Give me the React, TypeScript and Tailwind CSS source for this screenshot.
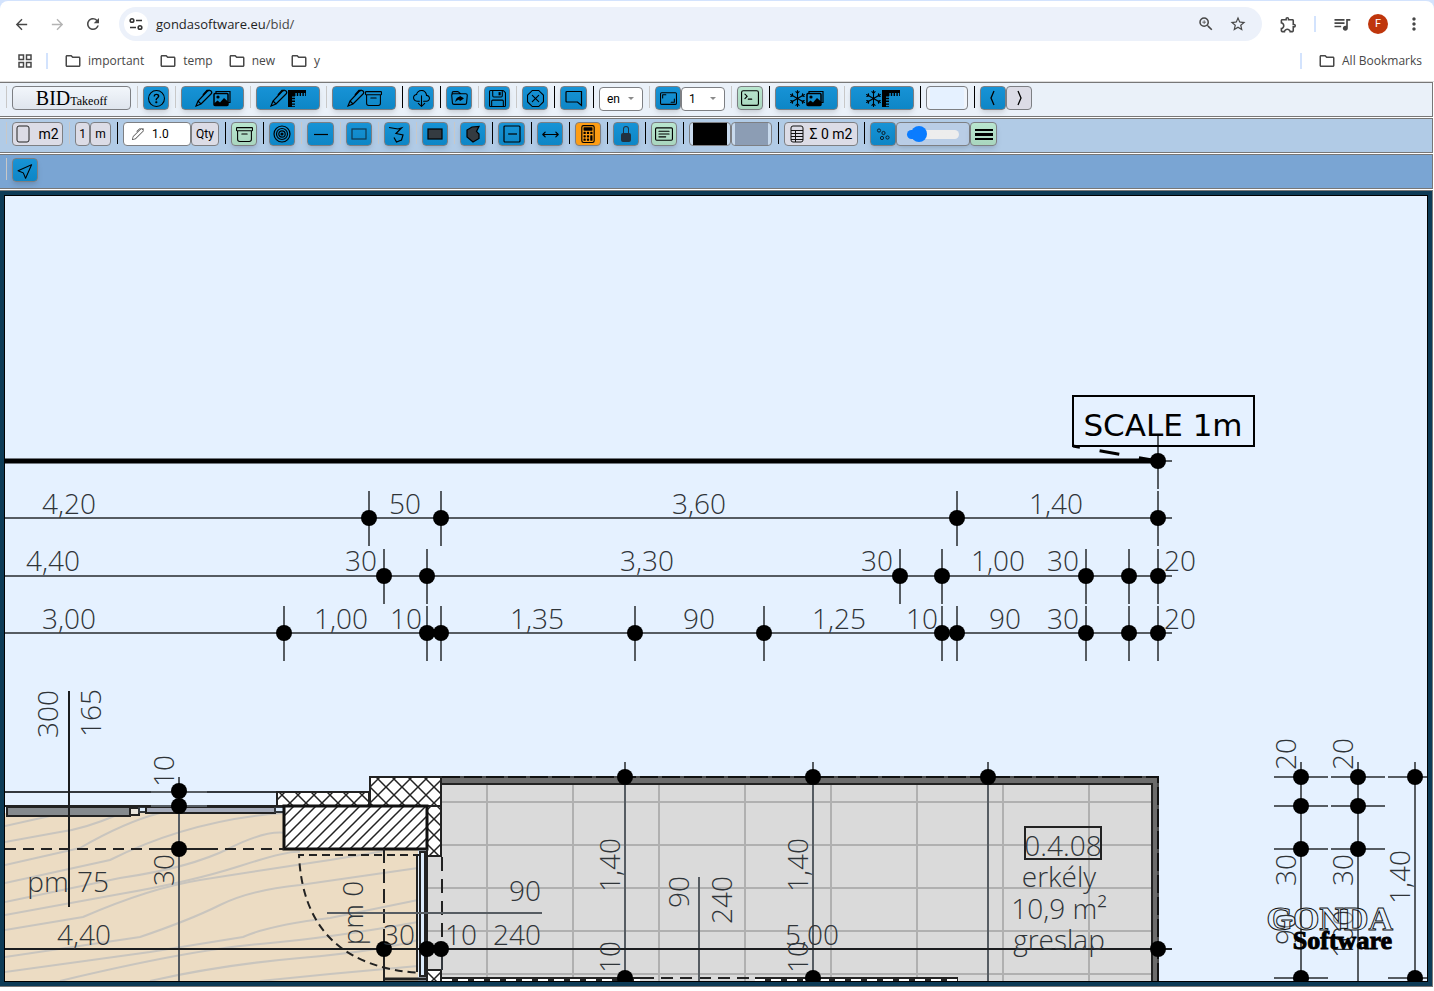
import type { ComponentPropsWithoutRef, ReactNode } from "react";
import clsx from "clsx";
import {
  BsArchive,
  BsArrows,
  BsAspectRatio,
  BsCalculator,
  BsCardText,
  BsCloudDownload,
  BsCursor,
  BsFloppy,
  BsFolderSymlink,
  BsLockFill,
  BsPen,
  BsQuestionCircle,
  BsSnow,
  BsTerminal,
  BsXOctagon,
} from "react-icons/bs";
import {
  MdArrowBack,
  MdArrowForward,
  MdMoreVert,
  MdOutlineExtension,
  MdOutlineFolder,
  MdOutlineGridView,
  MdQueueMusic,
  MdRefresh,
  MdStarBorder,
  MdZoomIn,
} from "react-icons/md";

/* ---------- browser bar ---------- */

const bookmarks = ["important", "temp", "new", "y"];

const TuneIcon = () => (
  <svg width="14" height="14" viewBox="0 0 14 14" fill="none" stroke="#333" strokeWidth="1.6">
    <circle cx="3" cy="3.5" r="1.8" />
    <path d="M7 3.5h6M1 10.5h6" />
    <circle cx="11" cy="10.5" r="1.8" />
  </svg>
);

const BrowserBar = () => (
  <header className="border-b border-[#dcdcdc] bg-[#d3e3fd] pt-px font-['Open_Sans',sans-serif] text-[#474747]">
    <div className="rounded-t-lg bg-white">
      <div className="flex h-[46px] items-center pl-[13px] pr-[10px]">
        <button aria-label="Back"><MdArrowBack size={17} /></button>
        <button aria-label="Forward" className="ml-[19px] text-[#b4b4b4]"><MdArrowForward size={17} /></button>
        <button aria-label="Reload" className="ml-[18px]"><MdRefresh size={18} /></button>
        <div className="ml-[17px] flex h-[34px] flex-1 items-center rounded-full bg-[#ecf1fa] pl-[5px] pr-[15px]">
          <button aria-label="Site information" className="flex size-6 items-center justify-center rounded-full bg-white">
            <TuneIcon />
          </button>
          <p className="ml-2 flex-1 text-[13px] leading-5">
            <span className="text-[#1f1f1f]">gondasoftware.eu</span>
            <span>/bid/</span>
          </p>
          <button aria-label="Zoom"><MdZoomIn size={18} /></button>
          <button aria-label="Bookmark this page" className="ml-[14px]"><MdStarBorder size={18} /></button>
        </div>
        <button aria-label="Extensions" className="ml-[17px]"><MdOutlineExtension size={19} /></button>
        <span className="ml-4 h-4 w-[2px] bg-[#d3e3fd]" />
        <button aria-label="Media" className="ml-4"><MdQueueMusic size={20} /></button>
        <button className="ml-4 size-5 rounded-full bg-[#bf360c] font-[Roboto,sans-serif] text-[11px] leading-5 text-white">F</button>
        <button aria-label="Menu" className="ml-4"><MdMoreVert size={20} /></button>
      </div>
      <nav className="flex h-[34px] items-center pb-[6px] pl-4 pr-3 text-[12px] leading-4">
        <button aria-label="Tab groups"><MdOutlineGridView size={18} /></button>
        <span className="ml-3 mr-4 h-4 w-[2px] bg-[#d3e3fd]" />
        {bookmarks.map((name) => (
          <a key={name} href="#" className="mr-[15px] flex items-center gap-[6px]">
            <MdOutlineFolder size={18} />
            {name}
          </a>
        ))}
        <span className="ml-auto mr-4 h-4 w-[2px] bg-[#d3e3fd]" />
        <a href="#" className="flex items-center gap-[6px]">
          <MdOutlineFolder size={18} />
          All Bookmarks
        </a>
      </nav>
    </div>
  </header>
);

/* ---------- toolbars ---------- */

const tones = {
  blue: "bg-linear-to-b from-[#1793d6] to-[#0d86c6] shadow-md",
  green: "bg-linear-to-b from-[#b9e6cf] to-[#a9d6be] shadow-md",
  orange: "bg-[#fd9d14] shadow-md",
  light: "bg-linear-to-b from-[#f2f6fb] to-[#dfe5ed]",
  gray: "bg-[#dcdce6]",
};

type ToolProps = ComponentPropsWithoutRef<"button"> & {
  label?: string;
  tone?: keyof typeof tones;
  width?: string;
};

const Tool = ({ label, tone = "blue", width = "w-[26px]", className, ...props }: ToolProps) => (
  <button
    aria-label={label}
    className={clsx(
      "flex h-6 shrink-0 items-center justify-center rounded border border-[#7d7f83] text-black",
      tones[tone],
      width,
      className
    )}
    {...props}
  />
);

const Sep = ({ dark }: { dark?: boolean }) => (
  <span className={clsx("ml-[6px] mr-[5px] h-[22px] w-px shrink-0", dark ? "bg-black" : "bg-[#c8c8c8]")} />
);

const Bar = ({ className, children }: { className: string; children: ReactNode }) => (
  <div className={clsx("mr-px flex h-[35px] items-start border-y border-r border-[#777] pt-[3px]", className)}>
    {children}
  </div>
);

const Glyph = ({ size = 18, children }: { size?: number; children: ReactNode }) => (
  <svg
    width={size}
    height={size}
    viewBox="0 0 18 18"
    fill="none"
    stroke="currentColor"
    strokeWidth="1.2"
    className="shrink-0"
  >
    {children}
  </svg>
);

const PenIcon = () => (
  <Glyph>
    <path d="M1 17L3 12L12.500 2Q14.500 .5 16 2T16 5L6 15z M3 12L6 15" />
    <path d="M8 6L12 1.500h2.500" strokeWidth="1.500" />
  </Glyph>
);

const ImagesIcon = () => (
  <Glyph>
    <path d="M3 4V2.500h14v11h-2" />
    <rect x="1" y="4.500" width="14" height="12" rx="1" strokeWidth="1.500" />
    <circle cx="5" cy="8" r="1.600" fill="currentColor" stroke="none" />
    <path d="M1 14.500l3.500-3 2.500 2 4-4.500 4 3.500v4H1z" fill="currentColor" stroke="none" />
  </Glyph>
);

const RulerIcon = () => (
  <Glyph>
    <path fill="currentColor" stroke="none" d="M0 1h18v3H6v2H4v12H0z" />
    <path d="M6 5.500h12" strokeWidth="3" strokeDasharray="1.400 1.400" />
    <path d="M5.500 6v12" strokeWidth="3" strokeDasharray="1.400 1.400" />
  </Glyph>
);

const Dropdown = ({ label, value }: { label: string; value: string }) => (
  <div className="relative h-6 w-11 shrink-0">
    <select
      aria-label={label}
      defaultValue={value}
      className="size-full appearance-none rounded border border-[#7d7f83] bg-white pl-[7px] text-[12px] leading-4 text-black"
    >
      <option>{value}</option>
    </select>
    <span className="pointer-events-none absolute right-[9px] top-[11px] border-x-[3px] border-t-[3px] border-x-transparent border-t-[#8a8a8a]" />
  </div>
);

const ColorField = ({ label, value, width = "w-[42px]" }: { label: string; value: string; width?: string }) => (
  <input
    type="color"
    aria-label={label}
    defaultValue={value}
    className={clsx(
      "h-6 shrink-0 rounded border border-[#7d7f83] bg-white/30 px-[3px] [&::-webkit-color-swatch-wrapper]:p-0 [&::-webkit-color-swatch]:border-0",
      width
    )}
  />
);

const MainBar = () => (
  <Bar className="bg-[#eaf1f9]">
    <Sep />
    <Tool tone="light" width="w-[119px]" className="items-baseline! font-['Liberation_Serif',serif]">
      <span className="text-[20px] leading-[22px]">BID</span>
      <span className="text-[12px]">Takeoff</span>
    </Tool>
    <Sep />
    <Tool label="Help"><BsQuestionCircle size={17} /></Tool>
    <Sep />
    <Tool label="Edit images" width="w-[63px]"><PenIcon /><ImagesIcon /></Tool>
    <Sep />
    <Tool label="Edit scale" width="w-16"><PenIcon /><RulerIcon /></Tool>
    <Sep />
    <Tool label="Edit archive" width="w-16"><PenIcon /><BsArchive size={17} /></Tool>
    <Sep dark />
    <Tool label="Download"><BsCloudDownload size={17} /></Tool>
    <Sep dark />
    <Tool label="Open"><BsFolderSymlink size={17} /></Tool>
    <Sep />
    <Tool label="Save"><BsFloppy size={17} /></Tool>
    <Sep />
    <Tool label="Close"><BsXOctagon size={17} /></Tool>
    <Sep dark />
    <Tool label="Comment" width="w-[27px]">
      <Glyph><path d="M2 2.500h14.500v14l-4-3.500H2c-.7 0-1-.3-1-1v-8.500c0-.7.3-1 1-1z" /></Glyph>
    </Tool>
    <Sep dark />
    <Dropdown label="Language" value="en" />
    <Sep />
    <Tool label="Fit"><BsAspectRatio size={17} /></Tool>
    <Dropdown label="Zoom level" value="1" />
    <Sep />
    <Tool label="Console" tone="green"><BsTerminal size={18} /></Tool>
    <Sep dark />
    <Tool label="Freeze images" width="w-[63px]"><BsSnow size={17} /><ImagesIcon /></Tool>
    <Sep />
    <Tool label="Freeze scale" width="w-16"><BsSnow size={17} /><RulerIcon /></Tool>
    <Sep dark />
    <ColorField label="Background colour" value="#e5f1ff" />
    <Sep dark />
    <Tool label="Previous">
      <Glyph><path d="M10 2L7 9l3 7" strokeWidth="1.300" /></Glyph>
    </Tool>
    <Tool label="Next" tone="gray">
      <Glyph><path d="M8 2l3 7L8 16" strokeWidth="1.300" /></Glyph>
    </Tool>
  </Bar>
);

const MeasureBar = () => (
  <Bar className="bg-[#b1cbe6]">
    <Sep />
    <Tool tone="gray" width="w-[51px]" className="gap-2 text-[14px]">
      <svg width="14" height="18" fill="none" stroke="#222" className="shrink-0">
        <rect x="1" y="1" width="12" height="16" rx="2" />
      </svg>
      m2
    </Tool>
    <Sep />
    <Tool tone="gray" width="w-[15px]" className="text-[12px]">1</Tool>
    <Tool tone="gray" width="w-[21px]" className="text-[12px]">m</Tool>
    <Sep dark />
    <label className="flex h-6 w-[68px] shrink-0 items-center rounded border border-[#7d7f83] bg-white pl-2">
      <BsPen size={12} className="shrink-0 text-[#555]" />
      <input aria-label="Quantity" defaultValue="1.0" className="ml-2 w-8 bg-transparent text-[12px] text-black" />
    </label>
    <Tool tone="gray" width="w-7" className="text-[12px]">Qty</Tool>
    <Sep dark />
    <Tool label="Archive" tone="green"><BsArchive size={17} /></Tool>
    <Sep dark />
    <Tool label="Point">
      <Glyph>
        <circle cx="9" cy="9" r="8" /><circle cx="9" cy="9" r="5.500" />
        <circle cx="9" cy="9" r="3.200" /><circle cx="9" cy="9" r="1" fill="currentColor" />
      </Glyph>
    </Tool>
    <Sep />
    <Tool label="Line" width="w-[27px]"><Glyph><path d="M2 9.500h14" /></Glyph></Tool>
    <Sep />
    <Tool label="Rectangle"><Glyph><rect x="2" y="4" width="14" height="10" stroke="#12384f" /></Glyph></Tool>
    <Sep />
    <Tool label="Polyline">
      <Glyph><path d="M1 2.500L10 4L13.500 3L8 8.500L15 10L13.500 15L8.500 17L6 12.500" /></Glyph>
    </Tool>
    <Sep />
    <Tool label="Filled rectangle"><Glyph><rect x="2" y="4" width="14" height="10" fill="#343b41" /></Glyph></Tool>
    <Sep />
    <Tool label="Filled polygon">
      <Glyph><path d="M8 2L15 1.500L12.500 6.500L15 9L15 13.500L9 17L3 12V5z" fill="#343b41" /></Glyph>
    </Tool>
    <Sep dark />
    <Tool label="Subtract" width="w-[27px]">
      <Glyph><rect x="1" y="1" width="16" height="16" rx="1" /><path d="M5 9h9" /></Glyph>
    </Tool>
    <Sep dark />
    <Tool label="Distance"><BsArrows size={19} /></Tool>
    <Sep dark />
    <Tool label="Calculator" tone="orange"><BsCalculator size={18} /></Tool>
    <Sep dark />
    <Tool label="Lock"><BsLockFill size={16} className="text-[#22323f]" /></Tool>
    <Sep dark />
    <Tool label="Notes" tone="green"><BsCardText size={18} /></Tool>
    <Sep dark />
    <ColorField label="Line colour" value="#000000" />
    <ColorField label="Fill colour" value="#8c9db4" width="w-[41px]" />
    <Sep dark />
    <Tool tone="gray" width="w-[74px]" className="gap-[6px] text-[14px]">
      <svg width="14" height="18" fill="none" stroke="#111" className="shrink-0">
        <rect x="1" y="1" width="12" height="16" rx="2" />
        <path d="M1 5.500h12M1 8.500h12M1 11.500h12M1 14.500h12M5.500 6v11" />
      </svg>
      <span className="whitespace-nowrap">Σ 0 m2</span>
    </Tool>
    <Sep dark />
    <Tool label="Nodes">
      <svg width="18" height="18" fill="none" stroke="#0b1d29">
        <circle cx="5" cy="5.500" r="1.600" /><circle cx="9.500" cy="8" r="1.600" />
        <circle cx="8" cy="13" r="1.600" /><circle cx="13.500" cy="12.500" r="1.600" />
      </svg>
    </Tool>
    <div className="flex h-6 w-[74px] shrink-0 items-center justify-center rounded border border-[#7d7f83] bg-[#b9cde6] shadow-md">
      <input
        type="range"
        aria-label="Node size"
        defaultValue={12}
        className="h-[9px] w-[52px] appearance-none rounded-full bg-linear-to-r from-[#0a7cff] from-25% to-[#ededed] to-25% [&::-webkit-slider-thumb]:size-4 [&::-webkit-slider-thumb]:appearance-none [&::-webkit-slider-thumb]:rounded-full [&::-webkit-slider-thumb]:bg-[#0a7cff]"
      />
    </div>
    <Tool label="Line width" tone="green" width="w-[27px]">
      <Glyph>
        <path d="M0 5h18" strokeWidth="2" />
        <path d="M0 9.500h18" strokeWidth="3" />
        <path d="M0 14h18" strokeWidth="2" />
      </Glyph>
    </Tool>
  </Bar>
);

/* ---------- floor plan ---------- */

const INK = "#33383d";

type Label = [text: string, x: number, y: number];

const dimensionRows = [
  { y: 518, nodes: [369, 441, 957, 1158] },
  { y: 576, nodes: [384, 427, 900, 942, 1086, 1129, 1158] },
  { y: 633, nodes: [284, 427, 441, 635, 764, 942, 957, 1086, 1129, 1158] },
];

const labels: Label[] = [
  ["4,20", 69, 514], ["50", 405, 514], ["3,60", 699, 514], ["1,40", 1056, 514],
  ["4,40", 53, 571], ["30", 361, 571], ["3,30", 647, 571], ["30", 877, 571],
  ["1,00", 998, 571], ["30", 1063, 571], ["20", 1180, 571],
  ["3,00", 69, 629], ["1,00", 341, 629], ["10", 406, 629], ["1,35", 537, 629], ["90", 699, 629],
  ["1,25", 839, 629], ["10", 922, 629], ["90", 1005, 629], ["30", 1063, 629], ["20", 1180, 629],
  ["pm", 48, 892], ["75", 93, 892], ["4,40", 84, 945],
  ["90", 525, 901], ["30", 399, 945], ["10", 461, 945], ["240", 517, 945], ["5,00", 812, 945],
  ["0.4.08", 1063, 856], ["erkély", 1059, 887], ["10,9 m²", 1059, 919], ["greslap", 1059, 950],
];

const upright: Label[] = [
  ["300", 58, 714], ["165", 101, 713], ["10", 174, 771], ["30", 174, 870], ["pm 0", 363, 913],
  ["1,40", 620, 865], ["10", 620, 957], ["1,40", 808, 865], ["10", 808, 957],
  ["90", 689, 892], ["240", 732, 900],
  ["20", 1296, 754], ["30", 1296, 870], ["90", 1296, 929],
  ["20", 1353, 754], ["30", 1353, 870], ["100", 1353, 934], ["1,40", 1410, 877],
];

const rightColumns = [
  { x: 1301, nodes: [777, 806, 849, 978] },
  { x: 1358, nodes: [777, 806, 849] },
  { x: 1415, nodes: [777, 978] },
];

const planNodes = [
  [1158, 461], [179, 791], [179, 806], [179, 849],
  [384, 949], [427, 949], [441, 949], [1158, 949],
  [625, 777], [813, 777], [988, 777], [625, 978], [813, 978],
];

const grain = [
  "M5 826L50 816",
  "M5 842L60 832Q84 829 117 815",
  "M5 865L80 848Q125 822 160 813",
  "M5 883L110 860Q190 820 283 813",
  "M5 902L120 878Q190 868 230 848T290 834",
  "M5 915L120 894Q190 882 240 866T300 852",
  "M5 930L83 917Q150 888 200 880T330 860L384 851",
  "M5 957L140 937Q190 920 220 905T300 885L418 868",
  "M5 972L150 952L243 937Q270 925 330 918L418 900",
  "M60 981Q190 950 260 944T418 922",
  "M150 981Q220 965 300 958T418 940",
  "M260 981L330 974L418 966",
];

const FloorPlan = () => (
  <svg
    viewBox="5 196 1422 785"
    preserveAspectRatio="xMinYMin slice"
    className="block w-full bg-[#e5f1ff]"
    fill="none"
    stroke={INK}
    strokeWidth="2"
  >
    <defs>
      <pattern id="cross" width="16" height="16" patternUnits="userSpaceOnUse" x="2" y="3">
        <rect width="16" height="16" fill="#fff" stroke="none" />
        <path d="M0 0L16 16M16 0L0 16" stroke="#222" strokeWidth="1.500" />
      </pattern>
      <pattern id="hatch" width="11" height="11" patternUnits="userSpaceOnUse">
        <rect width="11" height="11" fill="#fff" stroke="none" />
        <path d="M-2 13L13 -2M-2 2L2 -2M9 13L13 9" stroke="#222" strokeWidth="1.500" />
      </pattern>
    </defs>

    {/* room floors */}
    <path d="M5 813H284V849H418V981H5z" fill="#ecdcc3" stroke="none" />
    <g stroke="#c9c5be">
      {grain.map((d) => <path key={d} d={d} />)}
    </g>
    <rect x="428" y="783" width="726" height="198" fill="#dadada" stroke="none" />
    <g stroke="#b0b0b0">
      {[487, 573, 659, 745, 831, 917, 1003, 1089].map((x) => <path key={x} d={`M${x} 784V981`} />)}
      {[802, 845].map((y) => <path key={y} d={`M442 ${y}H1153`} />)}
      {[888, 931, 974].map((y) => <path key={y} d={`M428 ${y}H1153`} />)}
    </g>

    {/* balcony wall */}
    <path d="M442 781H1156V981" stroke="#6c6c6c" strokeWidth="6" />
    <path d="M442 784H1152V981" stroke="#222" />
    <path d="M442 777H1158V981" stroke="#4a4a4a" />
    <path d="M442 777H1158V981" stroke="#111" strokeDasharray="18 4" />

    {/* windows */}
    <path d="M5 792H276" />
    <rect x="7" y="807" width="123" height="9" fill="#858a8e" stroke="#222" />
    <rect x="130" y="808" width="9" height="7" fill="#e8e4dc" stroke="#222" />
    <rect x="139" y="807" width="7" height="5" fill="#dcebfb" />
    <rect x="146" y="807" width="129" height="6" fill="#a5abba" stroke="#222" />
    <rect x="275" y="807" width="9" height="5" fill="#dcebfb" />
    <path d="M5 806H284" stroke="#222" />

    {/* walls */}
    <rect x="277" y="792" width="92" height="14" fill="url(#cross)" stroke="#222" />
    <rect x="370" y="777" width="71" height="29" fill="url(#cross)" stroke="#222" />
    <rect x="427" y="806" width="14" height="50" fill="url(#cross)" stroke="#222" />
    <rect x="427" y="970" width="14" height="14" fill="url(#cross)" stroke="#222" />
    <rect x="284" y="806" width="143" height="43" fill="url(#hatch)" stroke="#111" strokeWidth="3" />

    {/* balcony door */}
    <rect x="420" y="852" width="5" height="124" fill="#dcebfb" stroke="#222" />
    <path d="M417 855V972M427 849V981" stroke="#222" />
    <path d="M421 855H299Q304 966 421 973" stroke="#222" strokeDasharray="8 5" />
    <path d="M384 849V930" strokeDasharray="14 6" stroke="#222" />
    <path d="M384 930V981" stroke="#222" />
    <path d="M442 857V950" strokeDasharray="14 8" stroke="#222" />
    <path d="M442 950V970" />
    <path d="M384 979H427" stroke="#222" strokeWidth="3" />
    <path d="M442 978H642M755 978H958" stroke="#222" />
    <path d="M642 978H755" stroke="#222" strokeDasharray="12 7" />
    <path d="M442 980H640M755 980H958" stroke="#222" strokeWidth="3" />
    <path d="M442 980H640M755 980H958" stroke="#fff" strokeWidth="2" strokeDasharray="10 6" />

    {/* dimension lines */}
    <g stroke="#565c62">
      {dimensionRows.map(({ y, nodes }) => (
        <g key={y}>
          <path d={`M5 ${y}H1172`} />
          {nodes.map((x) => <path key={x} d={`M${x} ${y - 27}V${y + 28}`} />)}
        </g>
      ))}
      {rightColumns.map(({ x, nodes }) => (
        <g key={x}>
          <path d={`M${x} 762V981`} />
          {nodes.map((y) => <path key={y} d={`M${x - 27} ${y}H${x + 27}`} />)}
        </g>
      ))}
      <path d="M1158 434V489M1158 461H1172" />
      <path d="M179 777V981M625 762V981M813 762V981M988 762V981M699 877V981M327 913H542" />
      <path d="M151 792H207M151 806H207" />
    </g>
    <path d="M69 691V907M5 949H1172" stroke="#1b1d1f" />
    <path d="M5 849H151M207 849H284" stroke="#222" strokeDasharray="11 7" />
    <path d="M151 849H207" stroke="#222" />
    <path d="M5 461H1158" stroke="#000" strokeWidth="5" />

    <g fill="#000" stroke="none">
      {planNodes.map(([x, y]) => <circle key={`${x}-${y}`} cx={x} cy={y} r="8" />)}
      {dimensionRows.map(({ y, nodes }) => nodes.map((x) => <circle key={`${x}-${y}`} cx={x} cy={y} r="8" />))}
      {rightColumns.map(({ x, nodes }) => nodes.map((y) => <circle key={`${x}-${y}`} cx={x} cy={y} r="8" />))}
    </g>

    {/* dimension and room labels */}
    <g
      fill="#2f3438"
      stroke="none"
      textAnchor="middle"
      className="font-['Open_Sans','Noto_Sans',sans-serif] text-[28px] font-light"
    >
      {labels.map(([text, x, y]) => <text key={`${x}-${y}`} x={x} y={y}>{text}</text>)}
      {upright.map(([text, x, y]) => (
        <text key={`${x}-${y}`} transform={`translate(${x} ${y}) rotate(-90)`}>{text}</text>
      ))}
    </g>
    <rect x="1025" y="827" width="76" height="32" stroke="#222" />

    {/* scale marker */}
    <path d="M1073 446L1158 461" stroke="#000" strokeWidth="3" strokeDasharray="20 20" strokeDashoffset="13" />
    <rect x="1073" y="396" width="181" height="50" stroke="#000" />
    <text x="1163" y="436" textAnchor="middle" fill="#000" stroke="none" className="font-['DejaVu_Sans',sans-serif] text-[31px]">
      SCALE 1m
    </text>

    {/* watermark */}
    <g className="font-['Liberation_Serif',serif] font-bold" textAnchor="end">
      <text x="1393" y="930" fill="#e5f1ff" fillOpacity="0.5" stroke="#111" strokeWidth="1" className="text-[34px]">GONDA</text>
      <text x="1392" y="949" fill="#000" stroke="#000" strokeWidth="1" className="text-[26px]">Software</text>
    </g>
  </svg>
);

export default function App() {
  return (
    <div className="flex min-h-screen flex-col bg-white">
      <BrowserBar />
      <main className="flex flex-1 flex-col gap-px pb-1 font-[Roboto,sans-serif]">
        <MainBar />
        <MeasureBar />
        <Bar className="bg-[#7aa5d3]">
          <Sep />
          <Tool label="Select"><BsCursor size={17} /></Tool>
        </Bar>
        <div className="mr-px flex flex-1 border-y border-r border-[#777] bg-[#0d3b56] p-1">
          <div className="w-full overflow-hidden border border-black bg-[#e5f1ff]">
            <FloorPlan />
          </div>
        </div>
      </main>
    </div>
  );
}
